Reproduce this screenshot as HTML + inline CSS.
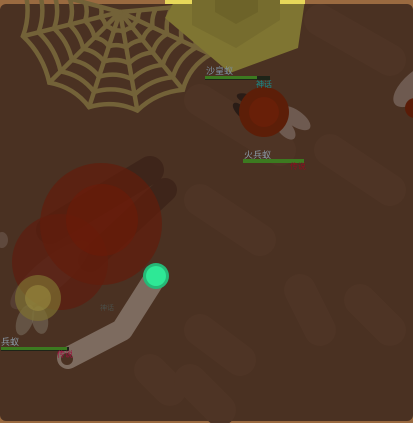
<!DOCTYPE html>
<html><head><meta charset="utf-8"><style>
html,body{margin:0;padding:0;width:413px;height:423px;overflow:hidden;background:#7a5232}
svg{display:block}
text{font-family:"Liberation Sans","Noto Sans CJK SC",sans-serif}
</style></head><body>
<svg width="413" height="423" viewBox="0 0 413 423" xmlns="http://www.w3.org/2000/svg">
<rect x="0" y="0" width="413" height="423" fill="#9a6a40"/>
<rect x="0" y="4" width="413" height="417" rx="6" fill="#4a3122"/>
<g stroke="#4e3425" stroke-width="32" stroke-linecap="round" fill="none">
<path d="M320 20 L390 60"/><path d="M200 100 L280 150"/><path d="M330 150 L390 190"/>
<path d="M150 370 L170 390"/><path d="M200 330 L240 360"/><path d="M300 290 L320 330"/>
<path d="M360 300 L390 330"/><path d="M200 200 L260 240"/><path d="M190 380 L220 410"/>
</g>
<g id="web" stroke="#736238" stroke-width="4.5" fill="none" stroke-linecap="round"></g>
<polygon points="165,18 175,0 305,0 298,48 230,73" fill="#7f7532"/>
<rect x="165" y="0" width="140" height="4" fill="#e8d85a"/>
<polygon points="192,0 280,0 280,20 236,48 192,25" fill="#766c2e"/>
<polygon points="215,0 258,0 258,12 236,24 215,12" fill="#6d6329"/>
<ellipse cx="418" cy="85" rx="30" ry="14" transform="rotate(-40 418 85)" fill="#6e5a50"/>
<circle cx="415" cy="108" r="10" fill="#5a1c08"/>
<ellipse cx="2" cy="240" rx="6" ry="8" fill="#6e5a50" opacity="0.6"/>
<ellipse cx="250" cy="100" rx="14" ry="5" transform="rotate(20 250 100)" fill="#2a1c16"/>
<ellipse cx="242" cy="112" rx="12" ry="5" transform="rotate(45 242 112)" fill="#2a1c16"/>
<ellipse cx="295" cy="118" rx="18" ry="8" transform="rotate(35 295 118)" fill="#6e5a50"/>
<ellipse cx="285" cy="128" rx="14" ry="7" transform="rotate(50 285 128)" fill="#6e5a50"/>
<circle cx="264" cy="112" r="25" fill="#5c1e08"/>
<circle cx="264" cy="112" r="15" fill="#681f08"/>
<text x="206" y="74" font-size="9" fill="#7c8fa0">沙皇蚁</text>
<rect x="205" y="76" width="65" height="4" fill="#1e2418"/>
<rect x="205" y="76" width="52" height="3" fill="#3c7a20"/>
<text x="256" y="87" font-size="8" fill="#1a8a8a">神话</text>
<text x="244" y="158" font-size="9" fill="#8a9aa8">火兵蚁</text>
<rect x="243" y="159" width="61" height="4" fill="#3c7a20"/>
<text x="290" y="169" font-size="8" fill="#8a1020">传说</text>
<g opacity="0.7">
<path d="M150 170 L50 230" stroke="#3a2018" stroke-width="28" stroke-linecap="round"/>
<path d="M165 190 L90 260" stroke="#3a2018" stroke-width="24" stroke-linecap="round"/>
</g>
<ellipse cx="50" cy="275" rx="50" ry="16" transform="rotate(-40 50 275)" fill="#6e5a50" opacity="0.35"/>
<circle cx="60" cy="262" r="48" fill="#5e1c0e" opacity="0.7"/>
<circle cx="101" cy="224" r="61" fill="#621c0c" opacity="0.7"/>
<circle cx="102" cy="220" r="36" fill="#6e1a08" opacity="0.55"/>
<ellipse cx="25" cy="320" rx="8" ry="16" transform="rotate(20 25 320)" fill="#7a7060" opacity="0.55"/>
<ellipse cx="40" cy="320" rx="8" ry="14" transform="rotate(-10 40 320)" fill="#7a7060" opacity="0.55"/>
<circle cx="38" cy="298" r="23" fill="#7e7030" opacity="0.7"/>
<circle cx="38" cy="298" r="13" fill="#9a8a40" opacity="0.6"/>
<path d="M155 278 L122 330 L68 358" stroke="#7d6b5f" stroke-width="22" stroke-linecap="round" stroke-linejoin="round" fill="none"/>
<circle cx="67" cy="359" r="6" fill="#4a3122"/>
<circle cx="156" cy="276" r="13" fill="#26b877"/>
<circle cx="156" cy="276" r="10" fill="#2ee896"/>
<text x="100" y="310" font-size="7" fill="#4a6060" opacity="0.6">神话</text>
<text x="1" y="345" font-size="9" fill="#8a9aa8">兵蚁</text>
<rect x="1" y="347" width="68" height="4" fill="#1e2418"/>
<rect x="1" y="347" width="66" height="3" fill="#3c7a20"/>
<text x="57" y="357" font-size="8" fill="#a01040">传说</text>
</svg>
<script>
(function(){
var g=document.getElementById('web'),cx=120,cy=12;
var ang=[-5,25,51,80,108,135,166,195],R=[20,36,52,68,84,100],h='';
function p(a,r){a=a*Math.PI/180;return [cx+r*Math.cos(a),cy+r*Math.sin(a)];}
ang.forEach(function(a){var e=p(a,100);h+='<line x1="'+cx+'" y1="'+cy+'" x2="'+e[0]+'" y2="'+e[1]+'"/>';});
R.forEach(function(r){var d='';for(var i=0;i<ang.length-1;i++){var s=p(ang[i],r),e=p(ang[i+1],r),m=p((ang[i]+ang[i+1])/2,r*0.88);
if(i==0)d+='M'+s[0]+' '+s[1];d+=' Q'+m[0]+' '+m[1]+' '+e[0]+' '+e[1];}h+='<path d="'+d+'"/>';});
g.innerHTML=h;})();
</script>
</body></html>
